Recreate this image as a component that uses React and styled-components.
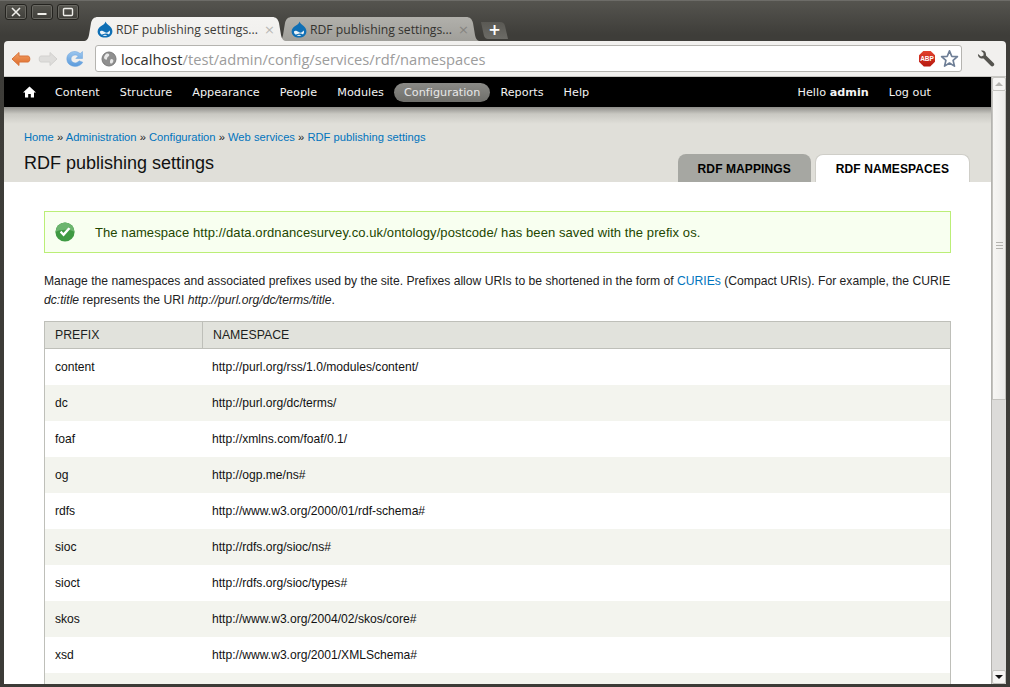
import React from 'react'
import styled, { createGlobalStyle } from 'styled-components'

const GlobalStyle = createGlobalStyle`
  html, body {
    margin: 0;
    padding: 0;
    background: #3c3b37;
    overflow: hidden;
  }
  * { box-sizing: border-box; }
`

const Window = styled.div`
  width: 1010px;
  height: 687px;
  display: flex;
  flex-direction: column;
  padding: 0 4px 3px 4px;
  overflow: hidden;
  border-top: 1px solid #6d6c68;
  background: linear-gradient(#55544f 0, #3e3d39 34px, #3c3b37 100%);
`

const TitleBar = styled.div`
  height: 40px;
  flex: none;
  display: flex;
  margin: 0 -4px;
  padding-left: 5px;
`

const Controls = styled.div`
  display: flex;
  gap: 4px;
  padding-top: 3px;
  height: 20px;
  margin-right: 3px;
`

const ControlButton = styled.div`
  width: 22px;
  height: 16px;
  border: 1px solid #24231f;
  border-radius: 3px;
  background: linear-gradient(#56554f, #3f3e3a);
  box-shadow: inset 0 0 0 1px #6a6963;
  display: flex;
  align-items: center;
  justify-content: center;
`

const TabStrip = styled.div`
  display: flex;
  align-items: flex-end;
  margin-left: 1px;
`

const Tab = styled.div`
  width: 204px;
  height: 24px;
  margin-right: -10px;
  padding: 1px 12px 0 14px;
  display: flex;
  align-items: center;
  gap: 3px;
  font: 12.2px "Open Sans", "DejaVu Sans", sans-serif;
  color: ${props => props.active ? '#3c3b37' : '#34332f'};
  background: ${props => props.active ? 'linear-gradient(#f4f3f1, #f0efed)' : 'linear-gradient(#b1b0ab, #a09f9a)'};
  clip-path: path('M0 24 C4 24 5 22 6 18 L8 6 C9 2 11 0 15 0 L189 0 C193 0 195 2 196 6 L198 18 C199 22 200 24 204 24 Z');
  z-index: ${props => props.active ? 2 : 1};
`

const TabIcon = styled.div`
  flex: none;
  display: flex;
`

const TabTitle = styled.span`
  flex: 1;
  min-width: 0;
  white-space: nowrap;
`

const TabClose = styled.span`
  flex: none;
  color: ${props => props.active ? '#b9b8b4' : '#85847f'};
  font: 13px "DejaVu Sans", sans-serif;
`

const NewTab = styled.div`
  width: 27px;
  height: 17px;
  margin: 0 0 2px 10px;
  background: linear-gradient(#5a5954, #6c6b66);
  clip-path: path('M0 0 L19 0 C22 0 23 1 24 4 L27 17 L7 17 C5 17 4 16 3 14 Z');
  color: #fff;
  font: bold 15px/16px "DejaVu Sans", sans-serif;
  text-align: center;
`

const Toolbar = styled.div`
  height: 36px;
  flex: none;
  display: flex;
  align-items: center;
  background: #f1f0ee;
  border-radius: 4px 4px 0 0;
  padding-left: 3px;
  border-bottom: 1px solid #c8c7c3;
`

const NavIcon = styled.div`
  width: 27px;
  height: 24px;
  display: flex;
  align-items: center;
  justify-content: center;
`

const Omnibox = styled.div`
  width: 867px;
  height: 27px;
  margin-left: 7px;
  display: flex;
  align-items: center;
  background: #fff;
  border: 1px solid #b5b4b0;
  border-radius: 3px;
  padding: 0 2px 0 5px;
  font: 14.7px "Open Sans", "DejaVu Sans", sans-serif;
  color: #9c9c9c;
`

const Url = styled.div`
  flex: 1;
  margin-left: 4px;
  white-space: nowrap;
`

const Host = styled.span`
  color: #33322e;
`

const Wrench = styled.div`
  margin-left: 15px;
  display: flex;
`

const Viewport = styled.div`
  flex: 1;
  min-height: 0;
  display: flex;
`

const Page = styled.div`
  flex: 1;
  min-width: 0;
  overflow: hidden;
  background: #fff;
  font: 12px "Liberation Sans", Arial, sans-serif;
  color: #333;
`

const TopNav = styled.div`
  height: 30px;
  background: #000;
  display: flex;
  align-items: center;
  padding: 0 17px 0 19px;
  font: 11.2px "DejaVu Sans", Verdana, sans-serif;
  letter-spacing: 0.04px;
  color: #f4f4f4;
`

const NavLink = styled.span`
  margin-left: ${props => props.first ? '9px' : '0'};
  padding: 3px 10px;
  border-radius: 10px;
  background: ${props => props.active ? 'linear-gradient(#8a8a86, #6e6e6a)' : 'none'};
  color: ${props => props.active ? '#e8e8e8' : '#f4f4f4'};
`

const UserLinks = styled.div`
  margin-left: auto;
  display: flex;
  gap: 20px;
  padding-right: 43px;
`

const Header = styled.div`
  height: 75px;
  background: linear-gradient(#8e8d89 0, #c9c8c2 7px, #e0dfd9 17px);
  padding: 23px 21px 0 20px;
  display: flex;
  justify-content: space-between;
`

const Breadcrumb = styled.div`
  font-size: 11.2px;
  line-height: 14px;
  color: #222;
`

const PageTitle = styled.h1`
  margin: 4px 0 0;
  font: 400 18px/30px "Liberation Sans", Arial, sans-serif;
  color: #111;
`

const Link = styled.a`
  color: #0074bd;
`

const TabBar = styled.div`
  display: flex;
  align-items: flex-end;
  gap: 4px;
  margin-top: 24px;
`

const PageTab = styled.div`
  height: 28px;
  padding: 1px 20px 0;
  display: flex;
  align-items: center;
  border-radius: 8px 8px 0 0;
  font: bold 12px "Liberation Sans", Arial, sans-serif;
  letter-spacing: 0.1px;
  color: #000;
  background: ${props => props.active ? '#fff' : '#a6a7a2'};
  border: ${props => props.active ? '1px solid #cfcec8' : '0'};
  border-bottom: 0;
`

const Content = styled.div`
  padding: 29px 40px 0;
`

const Message = styled.div`
  height: 42px;
  display: flex;
  align-items: center;
  gap: 20px;
  padding: 0 0 0 10px;
  background: #f8fff0;
  border: 1px solid #bbee77;
  color: #234600;
  font-size: 13px;
  letter-spacing: 0.08px;
`

const Intro = styled.p`
  margin: 19px 0 11px;
  font-size: 12.15px;
  line-height: 19px;
  color: #222;
`

const Table = styled.div`
  border: 1px solid #bebfb9;
  border-bottom: 0;
`

const HeadRow = styled.div`
  height: 27px;
  display: grid;
  grid-template-columns: 157px 1fr;
  background: #e1e2dc;
  border-bottom: 1px solid #bebfb9;
  font-size: 12.3px;
  color: #1c1e20;
`

const HeadCell = styled.div`
  display: flex;
  align-items: center;
  padding-left: 10px;
  border-left: ${props => props.second ? '1px solid #bebfb9' : '0'};
`

const Row = styled.div`
  height: 36px;
  display: grid;
  grid-template-columns: 157px 1fr;
  align-items: center;
  background: ${props => props.odd ? '#f3f4ee' : '#fff'};
  font-size: 12.1px;
  color: #111;
`

const Cell = styled.div`
  padding-left: 10px;
`

const Scrollbar = styled.div`
  width: 15px;
  flex: none;
  display: flex;
  flex-direction: column;
  background: #dcdbd9;
  border-left: 1px solid #b4b3af;
`

const ScrollButton = styled.div`
  height: 14px;
  flex: none;
  background: #f6f5f3;
  border: 1px solid #c4c3bf;
  border-radius: 2px;
  display: flex;
  align-items: center;
  justify-content: center;
`

const Arrow = styled.div`
  width: 0;
  height: 0;
  border-left: 4px solid transparent;
  border-right: 4px solid transparent;
  border-${props => props.down ? 'top' : 'bottom'}: 4px solid ${props => props.down ? '#111' : '#b4b3af'};
`

const Thumb = styled.div`
  height: 309px;
  flex: none;
  padding-top: 2px;
  background: linear-gradient(90deg, #f7f6f4, #ecebe9);
  border: 1px solid #c4c3bf;
  border-top: 0;
  display: flex;
  align-items: center;
  justify-content: center;
`

const Grip = styled.div`
  width: 7px;
  height: 8px;
  background: repeating-linear-gradient(#b4b3af 0 1px, transparent 1px 3px);
`

const ScrollTrack = styled.div`
  flex: 1;
`

const AbpBadge = styled.div`
  width: 16px;
  height: 16px;
  flex: none;
  background: linear-gradient(#e2422f, #b5170d);
  clip-path: polygon(30% 0, 70% 0, 100% 30%, 100% 70%, 70% 100%, 30% 100%, 0 70%, 0 30%);
  color: #fff;
  font: bold 6.5px/16px "Liberation Sans", Arial, sans-serif;
  text-align: center;
`

const DrupalIcon = () => (
  <svg width="16" height="17" viewBox="0 0 16 17">
    <path d="M8.6 0.4 C9.2 2.6 11 3.6 12.6 5 C14.4 6.6 15.4 8.4 15.4 10.4 C15.4 14 12.2 16.6 8 16.6 C3.8 16.6 0.6 14 0.6 10.4 C0.6 7.4 3 5.6 5 4.4 C6.6 3.4 8 2.4 8.6 0.4 Z" fill="#0f6fb5" />
    <path d="M3 10.6 C4 9.2 5.6 9.6 8 11.2 C10 12.4 11.4 11 12.6 9.6 C13.4 11 13 12.6 12 13.4 C11 12.6 9.6 12.4 8.4 12.6 C6.8 12.8 5.6 14 4.4 13.4 C3.2 12.8 2.8 11.6 3 10.6 Z" fill="#eef5fa" />
    <path d="M5.6 14.6 C7 13.6 9 13.6 10.4 14.6 C9 15.2 7 15.2 5.6 14.6 Z" fill="#eef5fa" />
  </svg>
)

const BackIcon = () => (
  <svg width="20" height="16" viewBox="0 0 20 16">
    <defs>
      <linearGradient id="backFill" x1="0" y1="0" x2="0" y2="1">
        <stop offset="0" stopColor="#f2a066" />
        <stop offset="1" stopColor="#dd6a28" />
      </linearGradient>
    </defs>
    <path d="M8 1.5 L1 8 L8 14.5 L8 11 L17 11 C19.4 11 19.4 5 17 5 L8 5 Z" fill="url(#backFill)" stroke="#d8733a" strokeLinejoin="round" />
  </svg>
)

const ForwardIcon = () => (
  <svg width="20" height="16" viewBox="0 0 20 16">
    <path d="M12 1.5 L19 8 L12 14.5 L12 11 L3 11 C0.6 11 0.6 5 3 5 L12 5 Z" fill="#dedddb" stroke="#d2d1cf" strokeLinejoin="round" />
  </svg>
)

const ReloadIcon = () => (
  <svg width="18" height="18" viewBox="0 0 18 18">
    <defs>
      <linearGradient id="reloadFill" x1="0" y1="0" x2="0" y2="1">
        <stop offset="0" stopColor="#9cc6ee" />
        <stop offset="1" stopColor="#5b9bdc" />
      </linearGradient>
    </defs>
    <path d="M16.5 1.5 L16.5 8.5 L9.8 8.5 L12.3 6 C9.4 3.8 5 5.4 5 9 C5 12.8 10.4 14.6 13 10.8 L16.8 12.2 C14 18.4 0.8 18 0.8 9 C0.8 1.8 9.4 -0.8 14.2 3.6 Z" fill="url(#reloadFill)" stroke="#6aa3dc" strokeWidth="0.5" />
  </svg>
)

const GlobeIcon = () => (
  <svg width="16" height="16" viewBox="0 0 16 16" style={{ flex: 'none' }}>
    <circle cx="8" cy="8" r="7" fill="#8f8f8f" stroke="#7a7a7a" />
    <path d="M5 3 C7 2 9 3 8 5 C7 6 6 6 6 8 C6 9 4 9 3 7 C3 5 4 4 5 3 Z M10 8 C12 8 13 9 12 11 C11 13 9 13 9 11 C9 10 9 9 10 8 Z" fill="#e8e8e8" />
  </svg>
)

const StarIcon = () => (
  <svg width="19" height="19" viewBox="0 0 18 18" style={{ marginLeft: 5, flex: 'none' }}>
    <path d="M9 1.8 L11.1 6.9 L16.5 7.3 L12.4 10.8 L13.7 16.2 L9 13.3 L4.3 16.2 L5.6 10.8 L1.5 7.3 L6.9 6.9 Z" fill="#fff" stroke="#6f7f97" strokeWidth="1.6" strokeLinejoin="round" />
  </svg>
)

const WrenchIcon = () => (
  <svg width="18" height="18" viewBox="0 0 18 18">
    <path d="M1 4 L4 6.5 L6.5 5.5 L6.5 3 L4 0.8 C6.6 0 9 1.6 9 4.4 L9 5.4 L16.6 13 C17.6 14 17.4 15 16.6 15.8 C15.6 16.8 14.6 16.6 13.8 15.8 L6.6 8.4 C3.4 9.2 0.6 7 1 4 Z" fill="#55544f" />
  </svg>
)

const HomeIcon = () => (
  <svg width="13" height="12" viewBox="0 0 13 12" style={{ flex: 'none' }}>
    <path d="M6.5 0.5 L13 6.4 L11 6.4 L11 11.5 L7.8 11.5 L7.8 8 L5.2 8 L5.2 11.5 L2 11.5 L2 6.4 L0 6.4 Z" fill="#fff" />
  </svg>
)

const CheckIcon = () => (
  <svg width="20" height="20" viewBox="0 0 20 20" style={{ flex: 'none' }}>
    <circle cx="10" cy="10" r="9.6" fill="#3f9a43" />
    <path d="M10 0.6 A9.4 9.4 0 0 1 19.4 10 C16 7 5 7 0.6 10 A9.4 9.4 0 0 1 10 0.6 Z" fill="#6cb56e" />
    <path d="M4.8 10.4 L8.6 14.4 L15.4 6.8 L13.4 5.4 L8.4 11 L6.4 8.8 Z" fill="#fff" />
  </svg>
)

const WindowGlyph = ({ kind }) => (
  <svg width="12" height="10" viewBox="0 0 12 10">
    {kind === 'close' && <path d="M2 1 L10 9 M10 1 L2 9" stroke="#f0efeb" strokeWidth="1.6" />}
    {kind === 'min' && <path d="M1.5 7 L10.5 7" stroke="#f0efeb" strokeWidth="2" />}
    {kind === 'max' && <rect x="1.5" y="1.5" width="9" height="7" rx="1" fill="none" stroke="#f0efeb" strokeWidth="1.4" />}
  </svg>
)

const menu = ['Content', 'Structure', 'Appearance', 'People', 'Modules', 'Configuration', 'Reports', 'Help']

const namespaces = [
  ['content', 'http://purl.org/rss/1.0/modules/content/'],
  ['dc', 'http://purl.org/dc/terms/'],
  ['foaf', 'http://xmlns.com/foaf/0.1/'],
  ['og', 'http://ogp.me/ns#'],
  ['rdfs', 'http://www.w3.org/2000/01/rdf-schema#'],
  ['sioc', 'http://rdfs.org/sioc/ns#'],
  ['sioct', 'http://rdfs.org/sioc/types#'],
  ['skos', 'http://www.w3.org/2004/02/skos/core#'],
  ['xsd', 'http://www.w3.org/2001/XMLSchema#'],
  ['', ''],
]

const App = () => (
  <Window>
    <GlobalStyle />
    <TitleBar>
      <Controls>
        <ControlButton><WindowGlyph kind="close" /></ControlButton>
        <ControlButton><WindowGlyph kind="min" /></ControlButton>
        <ControlButton><WindowGlyph kind="max" /></ControlButton>
      </Controls>
      <TabStrip>
        <Tab active>
          <TabIcon><DrupalIcon /></TabIcon>
          <TabTitle>RDF publishing settings...</TabTitle>
          <TabClose active>×</TabClose>
        </Tab>
        <Tab>
          <TabIcon><DrupalIcon /></TabIcon>
          <TabTitle>RDF publishing settings...</TabTitle>
          <TabClose>×</TabClose>
        </Tab>
        <NewTab>+</NewTab>
      </TabStrip>
    </TitleBar>
    <Toolbar>
      <NavIcon><BackIcon /></NavIcon>
      <NavIcon><ForwardIcon /></NavIcon>
      <NavIcon><ReloadIcon /></NavIcon>
      <Omnibox>
        <GlobeIcon />
        <Url><Host>localhost</Host>/test/admin/config/services/rdf/namespaces</Url>
        <AbpBadge>ABP</AbpBadge>
        <StarIcon />
      </Omnibox>
      <Wrench><WrenchIcon /></Wrench>
    </Toolbar>
    <Viewport>
      <Page>
        <TopNav>
          <HomeIcon />
          {menu.map((item, index) => (
            <NavLink key={item} first={index === 0} active={item === 'Configuration'}>{item}</NavLink>
          ))}
          <UserLinks>
            <span>Hello <b>admin</b></span>
            <span>Log out</span>
          </UserLinks>
        </TopNav>
        <Header>
          <div>
            <Breadcrumb>
              <Link>Home</Link> » <Link>Administration</Link> » <Link>Configuration</Link> » <Link>Web services</Link> » <Link>RDF publishing settings</Link>
            </Breadcrumb>
            <PageTitle>RDF publishing settings</PageTitle>
          </div>
          <TabBar>
            <PageTab>RDF MAPPINGS</PageTab>
            <PageTab active>RDF NAMESPACES</PageTab>
          </TabBar>
        </Header>
        <Content>
          <Message>
            <CheckIcon />
            <span>The namespace http://data.ordnancesurvey.co.uk/ontology/postcode/ has been saved with the prefix os.</span>
          </Message>
          <Intro>
            Manage the namespaces and associated prefixes used by the site. Prefixes allow URIs to be shortened in the form of <Link>CURIEs</Link> (Compact URIs). For example, the CURIE <i>dc:title</i> represents the URI <i>http://purl.org/dc/terms/title</i>.
          </Intro>
          <Table>
            <HeadRow>
              <HeadCell>PREFIX</HeadCell>
              <HeadCell second>NAMESPACE</HeadCell>
            </HeadRow>
            {namespaces.map(([prefix, uri], index) => (
              <Row key={index} odd={index % 2 === 1}>
                <Cell>{prefix}</Cell>
                <Cell>{uri}</Cell>
              </Row>
            ))}
          </Table>
        </Content>
      </Page>
      <Scrollbar>
        <ScrollButton><Arrow /></ScrollButton>
        <Thumb><Grip /></Thumb>
        <ScrollTrack />
        <ScrollButton><Arrow down /></ScrollButton>
      </Scrollbar>
    </Viewport>
  </Window>
)

export default App
